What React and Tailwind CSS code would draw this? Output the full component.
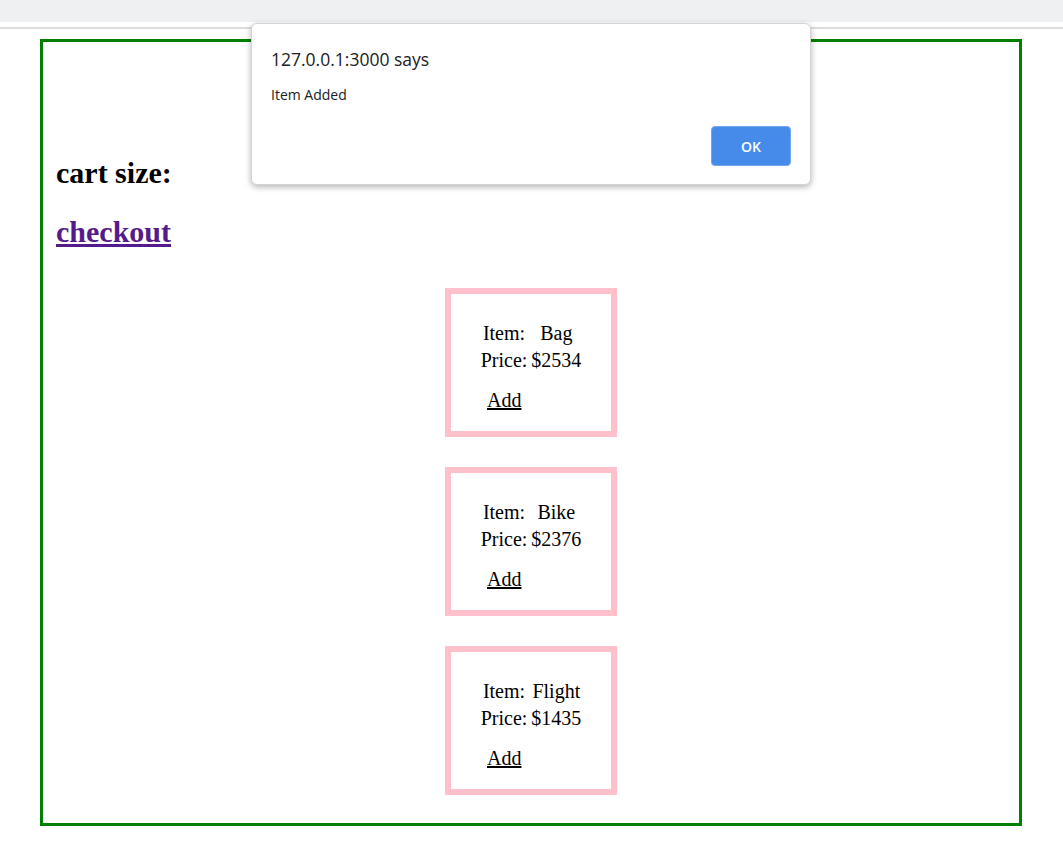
import React from 'react';

const items = [
  { name: 'Bag', price: 2534 },
  { name: 'Bike', price: 2376 },
  { name: 'Flight', price: 1435 },
];

const ItemCard = ({ item }) => {
  return (
    <div className="w-[172px] h-[149px] border-[6px] border-[#ffc0cb] flex flex-col items-center pt-[28px]">
      <div className="grid grid-cols-[auto_auto] gap-x-[4px] gap-y-[4px] text-center text-[20px] leading-[23px]">
        <div>Item:</div>
        <div>{item.name}</div>
        <div>Price:</div>
        <div>${item.price}</div>
      </div>
      <a href="#" className="self-start ml-[36px] mt-[17px] text-[20px] leading-[23px] text-black underline">
        Add
      </a>
    </div>
  );
};

const AlertDialog = () => {
  return (
    <div className="absolute left-[251px] top-[23px] w-[560px] h-[162px] bg-white rounded-[6px] border border-[#d4d4d4] shadow-[0_2px_6px_rgba(0,0,0,0.3)] px-[19px] pt-[23px] font-['Open_Sans',sans-serif]">
      <div className="text-[17.5px] leading-[24px] text-[#202124]">127.0.0.1:3000 says</div>
      <div className="mt-[14px] text-[14px] leading-[20px] text-[#202124]">Item Added</div>
      <div className="flex justify-end mt-[21px]">
        <button className="w-[80px] h-[40px] rounded-[4px] bg-[#468be9] border border-[#74a6ee] text-white text-[14px] font-semibold">
          OK
        </button>
      </div>
    </div>
  );
};

export default function App() {
  return (
    <div className="relative min-h-screen bg-white text-black font-['Liberation_Serif',serif]">
      <div className="h-[22px] bg-[#eff0f2]" />
      <div className="h-[5px]" />
      <div className="h-[2px] bg-[#dcdde0]" />
      <div className="pl-[40px] pt-[10px]">
        <div className="w-[982px] h-[787px] border-[3px] border-[#008000] pl-[13px] pt-[114px]">
          <h2 className="text-[30px] font-bold leading-[normal]">cart size:</h2>
          <h2 className="mt-[25px] text-[30px] font-bold leading-[normal]">
            <a href="#" className="text-[#551a8b] underline">checkout</a>
          </h2>
          <div className="flex flex-col items-center gap-[30px] mt-[39px] -ml-[13px]">
            {items.map((item) => (
              <ItemCard key={item.name} item={item} />
            ))}
          </div>
        </div>
      </div>
      <AlertDialog />
    </div>
  );
}
